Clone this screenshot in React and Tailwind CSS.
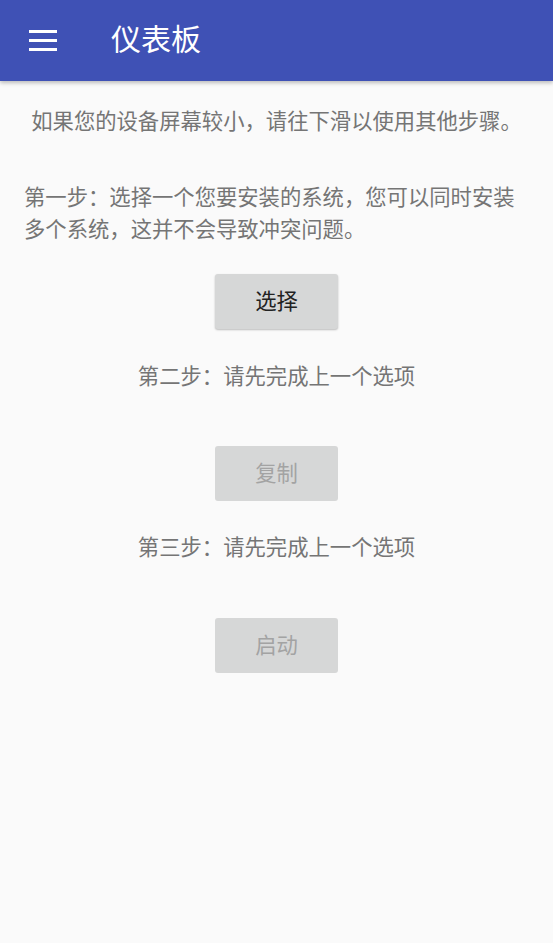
import React from 'react';

function MenuIcon() {
  return (
    <svg width="28" height="22" viewBox="0 0 28 22" className="block">
      <rect x="0" y="1" width="28" height="3" fill="#fff" />
      <rect x="0" y="10" width="28" height="3" fill="#fff" />
      <rect x="0" y="19" width="28" height="3" fill="#fff" />
    </svg>
  );
}

function StepButton(props) {
  const cls = props.disabled
    ? 'text-[#a3a3a3]'
    : 'text-[#222222] shadow-[0_1px_2px_rgba(0,0,0,0.25)]';
  return (
    <button
      type="button"
      disabled={props.disabled}
      className={'mx-auto block w-[123px] h-[55px] rounded-[3px] bg-[#d6d7d7] text-[21.33px] leading-none ' + cls}
    >
      {props.label}
    </button>
  );
}

export default function App() {
  return (
    <div className="w-[553px] h-[943px] bg-[#fafafa] overflow-hidden font-['Roboto','Noto_Sans_CJK_SC',sans-serif]">
      <header className="h-[81px] bg-[#3f51b5] flex items-center shadow-[0_2px_4px_rgba(0,0,0,0.25)] relative">
        <div className="ml-[29px] mt-[-1px]">
          <MenuIcon />
        </div>
        <h1 className="ml-[54px] text-white text-[30px] leading-none mt-[-2px]">仪表板</h1>
      </header>

      <main className="text-[21.33px] leading-[32px] text-[#757575]">
        <p className="mt-[25px] text-center">如果您的设备屏幕较小，请往下滑以使用其他步骤。</p>

        <p className="mt-[44px] px-[24px]">第一步：选择一个您要安装的系统，您可以同时安装多个系统，这并不会导致冲突问题。</p>

        <div className="mt-[28px]">
          <StepButton label="选择" />
        </div>

        <p className="mt-[32px] text-center">第二步：请先完成上一个选项</p>

        <div className="mt-[53px]">
          <StepButton label="复制" disabled />
        </div>

        <p className="mt-[31px] text-center">第三步：请先完成上一个选项</p>

        <div className="mt-[54px]">
          <StepButton label="启动" disabled />
        </div>
      </main>
    </div>
  );
}
